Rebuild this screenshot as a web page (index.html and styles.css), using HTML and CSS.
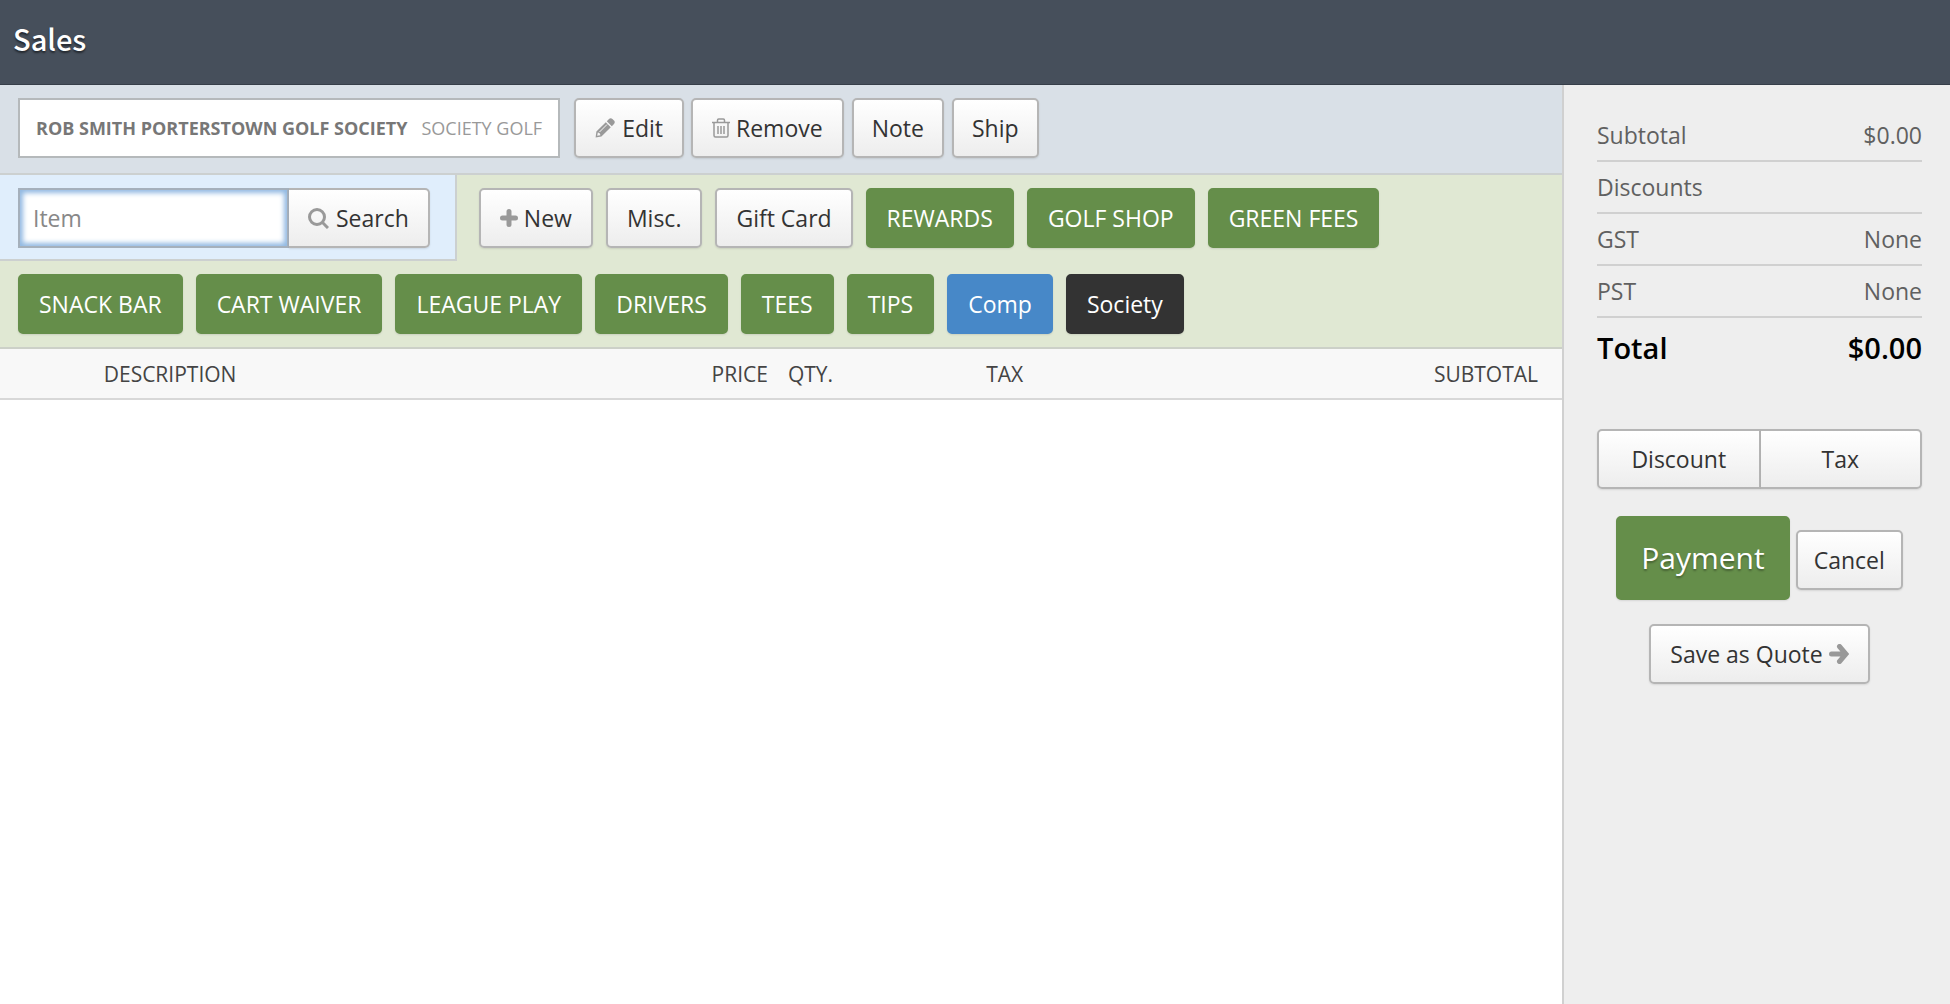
FILE: index.html
```html
<!DOCTYPE html>
<html lang="en">
<head>
<meta charset="utf-8">
<title>Sales</title>
<meta name="viewport" content="width=device-width, initial-scale=1">
<link rel="stylesheet" href="styles.css">
</head>
<body>
<header class="topbar"><h1 class="topbar-title">Sales</h1></header>
<div class="layout">
  <main class="sale">
    <section class="customer">
      <div class="customer-name"><strong>ROB SMITH PORTERSTOWN GOLF SOCIETY</strong><span>SOCIETY GOLF</span></div>
      <div class="customer-actions">
        <button class="btn" type="button"><svg class="icon" viewBox="0 0 20 20" aria-hidden="true"><path fill-rule="evenodd" d="M0.6 19.4 1.4 13.6 10.8 4.2 15.8 9.2 6.4 18.6ZM2.2 17.8 5.4 17.3C5.3 15.6 4.3 14.7 2.8 14.5Z"/><path d="M11.8 3.2 14 1C15 0 16.400 0 17.400 1L19 2.600C20 3.600 20 5 19 6L16.800 8.200Z"/><path class="icon-cut" d="M4.500 14 12 6.500"/></svg>Edit</button>
        <button class="btn" type="button"><svg class="icon icon-narrow icon-line" viewBox="1 0 18 20" aria-hidden="true"><path d="M1 4.500H19M6.500 4V2.200Q6.500 1 7.700 1H12.300Q13.500 1 13.500 2.200V4M3 5V17.500Q3 19 4.500 19H15.500Q17 19 17 17.500V5M7 8V16M10 8V16M13 8V16"/></svg>Remove</button>
      </div>
      <button class="btn" type="button">Note</button>
      <button class="btn" type="button">Ship</button>
    </section>
    <section class="items">
      <form class="search">
        <input class="search-input" type="text" placeholder="Item" aria-label="Item">
        <button class="btn search-btn" type="button"><svg class="icon icon-search" viewBox="0 0 21 21" aria-hidden="true"><circle cx="9" cy="9" r="7.500"/><path d="M14.500 14.500 20 20"/></svg>Search</button>
      </form>
      <button class="btn" type="button"><svg class="icon icon-narrow icon-plus" viewBox="1 0 18 20" aria-hidden="true"><path d="M10 3.500V16.500M3.500 10H16.500"/></svg>New</button>
      <button class="btn" type="button">Misc.</button>
      <button class="btn" type="button">Gift Card</button>
      <button class="btn btn-green" type="button">REWARDS</button>
      <button class="btn btn-green" type="button">GOLF SHOP</button>
      <button class="btn btn-green" type="button">GREEN FEES</button>
      <button class="btn btn-green" type="button">SNACK BAR</button>
      <button class="btn btn-green" type="button">CART WAIVER</button>
      <button class="btn btn-green" type="button">LEAGUE PLAY</button>
      <button class="btn btn-green" type="button">DRIVERS</button>
      <button class="btn btn-green" type="button">TEES</button>
      <button class="btn btn-green" type="button">TIPS</button>
      <button class="btn btn-blue" type="button">Comp</button>
      <button class="btn btn-dark" type="button">Society</button>
    </section>
    <table class="lines">
      <thead>
        <tr>
          <td class="col-action"></td>
          <th class="col-description" scope="col">DESCRIPTION</th>
          <th class="col-price" scope="col">PRICE</th>
          <th class="col-qty" scope="col">QTY.</th>
          <th class="col-tax" scope="col">TAX</th>
          <th class="col-subtotal" scope="col">SUBTOTAL</th>
        </tr>
      </thead>
    </table>
  </main>
  <aside class="summary">
    <table class="totals">
      <tbody>
        <tr><th scope="row">Subtotal</th><td>$0.00</td></tr>
        <tr><th scope="row">Discounts</th><td></td></tr>
        <tr><th scope="row">GST</th><td>None</td></tr>
        <tr><th scope="row">PST</th><td>None</td></tr>
        <tr class="total"><th scope="row">Total</th><td>$0.00</td></tr>
      </tbody>
    </table>
    <div class="adjust">
      <button class="btn" type="button">Discount</button>
      <button class="btn" type="button">Tax</button>
    </div>
    <div class="pay">
      <button class="btn btn-green btn-large" type="button">Payment</button>
      <button class="btn btn-narrow" type="button">Cancel</button>
    </div>
    <div class="quote">
      <button class="btn" type="button">Save as Quote<svg class="icon icon-arrow" viewBox="0 0 20 20" aria-hidden="true"><path d="M2.500 10H16M10.500 2.500 17 10 10.500 17.500"/></svg></button>
    </div>
  </aside>
</div>
</body>
</html>
```
FILE: styles.css
```css
* { box-sizing: border-box; }

body {
  margin: 0;
  min-height: 100vh;
  display: flex;
  flex-direction: column;
  background: #fff;
  color: #333;
  font: 23px/32px "Open Sans", "Noto Sans", sans-serif;
}

.topbar {
  padding: 16px 13px 24px;
  background: #464f5b;
  border-bottom: 1px solid #363e49;
}

.topbar-title {
  margin: 0;
  color: #fff;
  font: 500 29px/44px "Noto Sans CJK SC", "Open Sans", sans-serif;
  text-shadow: 0 2px 2px rgba(0, 0, 0, 0.5);
}

.layout { flex: 1; display: flex; }
.sale { flex: 1; min-width: 0; }

.btn {
  display: inline-flex;
  align-items: center;
  justify-content: center;
  height: 60px;
  padding: 0 19px;
  border: 2px solid #b5b5b5;
  border-radius: 5px;
  background: linear-gradient(#fff, #ededed);
  color: #333;
  font: inherit;
  white-space: nowrap;
  box-shadow: 0 1px 2px rgba(0, 0, 0, 0.1);
}

.btn-green { background: #658e4a; border-color: #658e4a; color: #fff; }
.btn-blue { background: #4788c8; border-color: #4788c8; color: #fff; }
.btn-dark { background: #333; border-color: #333; color: #fff; }

.icon { width: 20px; height: 20px; margin-right: 7px; fill: #999; }
.icon-narrow { width: 18px; margin-right: 6px; }
.icon-cut { fill: none; stroke: #f6f6f6; stroke-width: 1; }
.icon-line { fill: none; stroke: #999; stroke-width: 1.500; }
.icon-search { width: 21px; height: 21px; fill: none; stroke: #999; stroke-width: 3; }
.icon-plus { fill: none; stroke: #999; stroke-width: 5; stroke-linecap: round; }
.icon-arrow { margin: 0 0 0 6px; fill: none; stroke: #999; stroke-width: 5; stroke-linecap: round; }

.customer {
  display: flex;
  gap: 8px;
  padding: 13px 18px 15px;
  background: #d9e0e7;
  border-bottom: 2px solid #ccd0d0;
}

.customer > .btn { padding: 0 18px; }

.customer-name {
  display: flex;
  align-items: center;
  gap: 14px;
  height: 60px;
  margin-right: 6px;
  padding: 0 16px;
  background: #fff;
  border: 2px solid #b5b9bb;
  color: #999;
  font-size: 18px;
  white-space: nowrap;
}

.customer-name strong { color: #777; font-weight: 700; }
.customer-actions { display: flex; gap: 7px; }

.items {
  padding-left: 18px;
  background: #e0e8d3;
  border-bottom: 2px solid #ccd0c8;
  font-size: 0;
}

.items .btn { margin: 13px 13px 13px 0; font-size: 23px; vertical-align: top; }

.search {
  float: left;
  display: flex;
  margin: 0 22px 0 -18px;
  padding: 13px 25px 11px 18px;
  background: #e0eefc;
  border: solid #ccd0d0;
  border-width: 0 2px 2px 0;
}

.search-input {
  width: 271px;
  height: 60px;
  padding: 0 13px;
  border: 2px solid #a5b0bc;
  background: #fff;
  box-shadow: inset 0 0 5px 3px #92b9e2;
  color: #333;
  font: 23px/32px "Open Sans", "Noto Sans", sans-serif;
  outline: none;
}

.search-input::placeholder { color: #888; opacity: 1; }

.items .search-btn { margin: 0; border-left-width: 0; border-radius: 0 5px 5px 0; }

.lines { width: 100%; table-layout: fixed; border-collapse: collapse; }

.lines th,
.lines td {
  height: 50px;
  padding: 0 10px;
  background: #f8f8f8;
  border-bottom: 2px solid #d8d8d8;
  color: #444;
  font-size: 21px;
  font-weight: 400;
  text-align: left;
}

.lines .col-action { width: 6%; }
.lines .col-price { width: 10%; text-align: right; }
.lines .col-qty { width: 12.700%; }
.lines .col-tax { width: 12.500%; }
.lines .col-subtotal { width: 25%; padding-right: 24px; text-align: right; }

.summary {
  width: 388px;
  padding: 24px 28px 24px 33px;
  background: #eee;
  border-left: 2px solid #d0d0d0;
}

.totals { width: 100%; border-collapse: collapse; color: #606060; }

.totals th,
.totals td {
  height: 52px;
  padding: 0;
  border-bottom: 2px solid #d0d0d0;
  font-weight: 400;
  text-align: left;
}

.totals td { text-align: right; }

.totals .total th,
.totals .total td {
  height: 60px;
  border: 0;
  color: #000;
  font-size: 29px;
  font-weight: 600;
}

.adjust { display: flex; margin-top: 52px; }
.adjust .btn { flex: 1; }
.adjust .btn:first-child { border-radius: 5px 0 0 5px; }
.adjust .btn:last-child { border-left: 0; border-radius: 0 5px 5px 0; }

.pay {
  display: flex;
  justify-content: center;
  align-items: baseline;
  gap: 6px;
  margin-top: 27px;
}

.btn-large {
  height: 84px;
  padding: 0 23px;
  font-size: 30px;
  text-shadow: 0 2px 2px rgba(0, 0, 0, 0.3);
}

.btn-narrow { padding: 0 16px; }

.quote { display: flex; justify-content: center; margin-top: 24px; }
```
